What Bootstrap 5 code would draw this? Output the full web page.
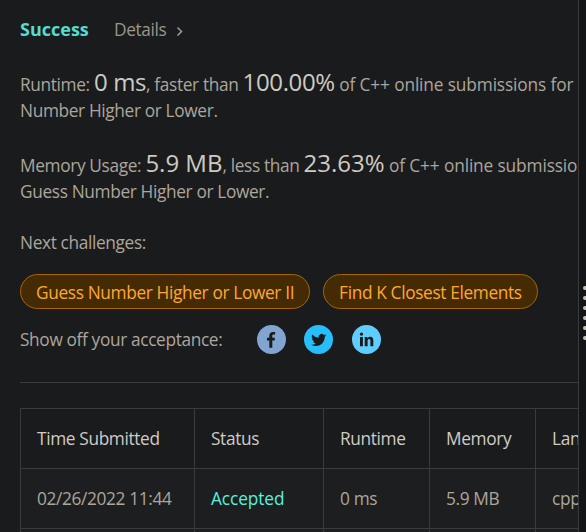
<!DOCTYPE html>
<html lang="en">
<head>
<meta charset="utf-8">
<title>Submission result</title>
<link href="https://cdn.jsdelivr.net/npm/bootstrap@5.3.0/dist/css/bootstrap.min.css" rel="stylesheet">
<style>
body{background:#131516;color:#aca69c;font-family:"Open Sans","Noto Sans",sans-serif;font-size:17.3px;line-height:26px;letter-spacing:-.36px}
.result-panel{width:579px;background:#1a1b1d;border-right:1px solid #393b3d;padding:17px 0 0 20px}
.success{color:#56dbcd;font-weight:700;font-size:18px;line-height:24px;padding-bottom:2px;letter-spacing:0;width:94px}
.details{color:#9c958a}
.runtime-block{margin:29px 0}
.memory-block{margin-bottom:25px}
.figure-lg{font-size:24px;line-height:0;color:#cfcac0;letter-spacing:-.35px}
.memory-block .figure-lg{letter-spacing:0}
.tail{letter-spacing:-.13px}
.line{height:26px;white-space:pre}
.pills{gap:13px;margin-top:18px}
.pill-link{height:35px;line-height:35px;border:1px solid #a96500;background:#452b04;color:#ffa82e;text-decoration:none;padding:0 15px}
.pill-link:hover{color:#ffc067}
.share-label{width:237px}
.share-icons{gap:18px}
.share-icons svg{display:block;width:29px;height:29px}
.share-icons svg:last-child{margin-left:1px}
.rule{height:1px;background:#393b3d;margin-top:28px}
.results{table-layout:fixed;width:621px;border-collapse:collapse;margin:25px 0 0;white-space:nowrap}
.results th,.results td{border:1px solid #393b3d;height:60px;padding:0 0 0 16px;font-weight:400;vertical-align:middle}
.results th{color:#d0ccc5}
.results tbody tr{background:#1c1e1f}
.results .accepted{color:#56f0df;font-weight:500;letter-spacing:-.1px}
.splitter{width:7px;padding-top:286px;gap:6px}
.splitter i{display:block;width:3px;height:4px;border-radius:2px 0 0 2px;background:#c9c2b5}
</style>
</head>
<body class="vh-100 overflow-hidden">
<div class="d-flex vh-100">
<main class="result-panel flex-shrink-0 overflow-hidden">
  <div class="d-flex align-items-center">
    <span class="success">Success</span>
    <a href="#" class="details text-decoration-none d-flex align-items-center">Details
      <svg class="ms-2" width="12" height="12" viewBox="0 0 10 12" fill="none" stroke="currentColor" stroke-width="1.6"><path d="M2.5 3.5 6.5 7.5 2.5 11.5"/></svg></a>
  </div>
  <div class="runtime-block">
    <div class="line"><span>Runtime: </span><span class="figure-lg">0 ms</span><span>, faster than </span><span class="figure-lg">100.00%</span><span class="tail"> of C++ online submissions for</span></div>
    <div class="line">Number Higher or Lower.</div>
  </div>
  <div class="memory-block">
    <div class="line"><span>Memory Usage: </span><span class="figure-lg">5.9 MB</span><span>, less than </span><span class="figure-lg">23.63%</span><span class="tail"> of C++ online submissions</span></div>
    <div class="line">Guess Number Higher or Lower.</div>
  </div>
  <div>Next challenges:</div>
  <div class="pills d-flex text-nowrap">
    <a href="#" class="pill-link rounded-pill">Guess Number Higher or Lower II</a>
    <a href="#" class="pill-link rounded-pill">Find K Closest Elements</a>
  </div>
  <div class="d-flex align-items-center mt-3">
    <span class="share-label">Show off your acceptance:</span>
    <div class="share-icons d-flex">
      <svg viewBox="0 0 29 29" role="img" aria-label="Facebook"><circle cx="14.5" cy="14.5" r="14.5" fill="#81a4d1"/><path fill="#1a1b1d" d="M12.3 22.8v-7.2H10v-2.8h2.3v-1.9c0-2.6 1.4-3.9 3.8-3.9h2v2.6h-1.400c-1 0-1.400.5-1.400 1.400v1.800H18l-.4 2.800h-2.300v7.200z"/></svg>
      <svg viewBox="0 0 29 29" role="img" aria-label="Twitter"><circle cx="14.5" cy="14.5" r="14.5" fill="#27bffb"/><path fill="#1a1b1d" transform="translate(7.2 7.4) scale(.94)" d="M5.03 14.6c6.04 0 9.34-5 9.34-9.33v-.43A6.7 6.7 0 0 0 16 3.14a6.500 6.500 0 0 1-1.890.518 3.300 3.300 0 0 0 1.447-1.817 6.500 6.500 0 0 1-2.087.793A3.286 3.286 0 0 0 7.875 5.630 9.320 9.320 0 0 1 1.114 2.200a3.290 3.290 0 0 0 1.018 4.382A3.300 3.300 0 0 1 .640 6.170v.045a3.290 3.290 0 0 0 2.632 3.218 3.200 3.200 0 0 1-.865.115 3 3 0 0 1-.614-.057 3.280 3.280 0 0 0 3.067 2.277A6.600 6.600 0 0 1 .780 13.180a6 6 0 0 1-.780-.045A9.340 9.340 0 0 0 5.030 14.600"/></svg>
      <svg viewBox="0 0 29 29" role="img" aria-label="LinkedIn"><circle cx="14.5" cy="14.5" r="14.5" fill="#60cdff"/><path fill="#1a1b1d" d="M8 12.100h2.900v9.200H8zM12.700 12.100h2.700v1.300c.6-1 1.600-1.600 2.900-1.600 2.200 0 3 1.500 3 3.800v5.700h-2.900v-5.200c0-1.200-.3-2-1.300-2-1.100 0-1.500.8-1.500 2v5.200h-2.900z"/><circle cx="9.450" cy="9.100" r="1.700" fill="#1a1b1d"/></svg>
    </div>
  </div>
  <div class="rule"></div>
  <table class="results">
    <colgroup><col style="width:174px"><col style="width:129px"><col style="width:106px"><col style="width:106px"><col style="width:106px"></colgroup>
    <thead><tr><th>Time Submitted</th><th>Status</th><th>Runtime</th><th>Memory</th><th>Lang</th></tr></thead>
    <tbody><tr><td>02/26/2022 11:44</td><td class="accepted">Accepted</td><td>0 ms</td><td>5.9 MB</td><td>cpp</td></tr>
    <tr><td></td><td></td><td></td><td></td><td></td></tr></tbody>
  </table>
</main>
<aside class="splitter d-flex flex-column align-items-end"><i></i><i></i><i></i><i></i><i></i><i></i></aside>
</div>
<script src="https://cdn.jsdelivr.net/npm/bootstrap@5.3.0/dist/js/bootstrap.bundle.min.js"></script>
</body>
</html>
